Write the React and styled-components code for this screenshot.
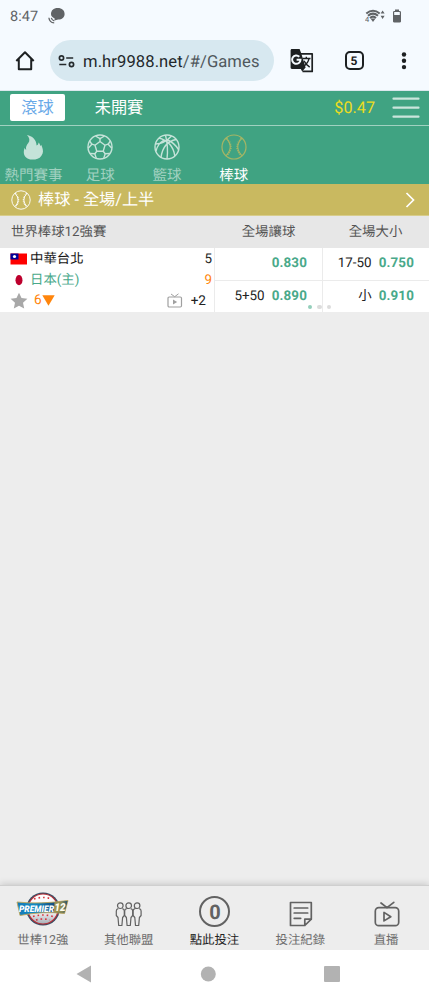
import React from "react";
import styled, { createGlobalStyle } from "styled-components";

const GlobalStyle = createGlobalStyle`
  * { box-sizing: border-box; }
  body {
    margin: 0;
    font-family: Roboto, "Noto Sans CJK TC", sans-serif;
    text-rendering: geometricPrecision;
    background: #ededed;
  }
  svg { display: block; flex: none; }
`;

const Screen = styled.div`
  display: flex;
  flex-direction: column;
  width: 429px;
  height: 1000px;
  overflow: hidden;
  background: #ededed;
`;

/* phone status bar + browser bar */

const StatusBar = styled.div`
  display: flex;
  align-items: center;
  height: 32px;
  padding: 0 27px 0 10px;
  background: #f5faff;
  color: #606366;
  font-size: 14.5px;
  letter-spacing: 0.1px;
`;

const StatusIcons = styled.div`
  display: flex;
  align-items: center;
  gap: 7px;
  margin-left: auto;
`;

const BrowserBar = styled.div`
  display: flex;
  align-items: center;
  height: 59px;
  padding: 0 18px 1px 14px;
  background: #f5faff;
  border-bottom: 1px solid #dbe7ed;
`;

const AddressBar = styled.div`
  display: flex;
  align-items: center;
  gap: 8px;
  width: 224px;
  height: 41px;
  margin: 0 16px 0 14px;
  padding: 3px 0 0 8px;
  border-radius: 21px;
  background: #d7e8f0;
  color: #24292c;
  font-size: 16.6px;
  letter-spacing: 0.08px;
  white-space: nowrap;
`;

const UrlPath = styled.span`
  color: #50585d;
`;

const TabCount = styled.div`
  display: grid;
  place-items: center;
  width: 19px;
  height: 19px;
  margin: 0 37.5px 0 30.5px;
  border: 2px solid #1d2022;
  border-radius: 5px;
  color: #1d2022;
  font-size: 12px;
  font-weight: 700;
  line-height: 1;
`;

/* site header */

const TopNav = styled.header`
  display: flex;
  align-items: center;
  height: 35px;
  padding: 0 9px 1px 10px;
  background: #40a382;
  border-bottom: 1px solid #a0d1c0;
`;

const TopTab = styled.button`
  width: ${({ $active }) => ($active ? "55px" : "108px")};
  height: 27px;
  padding: 0;
  border: 0;
  border-radius: 2px;
  background: ${({ $active }) => ($active ? "#fff" : "transparent")};
  color: ${({ $active }) => ($active ? "#68a9e8" : "#fff")};
  font-family: inherit;
  font-size: 16.2px;
  line-height: 27px;
`;

const Balance = styled.div`
  margin: 0 17px 0 auto;
  color: #eddd1f;
  font-size: 16.2px;
`;

const Sports = styled.nav`
  display: flex;
  height: 58px;
  background: #40a382;
`;

const Sport = styled.div`
  display: flex;
  flex-direction: column;
  align-items: center;
  width: 66.8px;
  padding-top: 8px;
  color: ${({ $active }) => ($active ? "#fff" : "#a0d1c0")};
  font-size: 14.5px;
  line-height: 22px;
  white-space: nowrap;
  svg { margin-bottom: 5px; color: ${({ $active }) => ($active ? "#a5b565" : "#c5e3d9")}; }
`;

const MarketBar = styled.div`
  display: flex;
  align-items: center;
  gap: 7px;
  height: 32px;
  padding: 0 14px 0 11px;
  border-bottom: 1px solid #d8cd8b;
  background: #c9b960;
  color: #fff;
  font-size: 16.2px;
  line-height: 30px;
  > svg:last-child { margin-left: auto; }
`;

/* odds table */

const LeagueRow = styled.div`
  display: grid;
  grid-template-columns: 215px 107px 107px;
  align-items: center;
  height: 32px;
  padding-bottom: 4px;
  background: #e7e7e7;
  color: #555;
  font-size: 13.4px;
  text-align: center;
`;

const LeagueName = styled.div`
  padding-left: 11px;
  text-align: left;
`;

const Match = styled.section`
  position: relative;
  display: grid;
  grid-template-columns: 214px 108px 107px;
  height: 64px;
  background: #fff;
`;

const Teams = styled.div`
  display: flex;
  flex-direction: column;
  padding: 1px 2px 0 10px;
`;

const TeamRow = styled.div`
  display: flex;
  align-items: center;
  height: 20.6px;
  color: ${({ $home }) => ($home ? "#49a98a" : "#151515")};
  font-size: 13.4px;
  line-height: 20px;
  svg { margin-right: 3px; }
`;

const TeamName = styled.span`
  padding-top: 2px;
`;

const Score = styled.span`
  margin: 2px 0 0 auto;
  color: ${({ $hot }) => ($hot ? "#ff850c" : "#222")};
`;

const MatchInfo = styled.div`
  display: flex;
  align-items: center;
  height: 20.6px;
  padding-right: 6px;
  color: #ff850c;
  font-size: 13.6px;
`;

const Inning = styled.span`
  margin-left: 6px;
`;

const MoreCount = styled.span`
  margin: 1px 0 0 8px;
  color: #222;
`;

const OddsColumn = styled.div`
  display: grid;
  grid-template-rows: 32px 32px;
  border-left: 1px solid #ebebeb;
`;

const OddsCell = styled.div`
  display: flex;
  align-items: baseline;
  justify-content: flex-end;
  gap: 7px;
  padding: 1px 15px 0 0;
  color: #222;
  font-size: 13.4px;
  line-height: 30.5px;
  & + & { border-top: 1px solid #ebebeb; }
`;

const Price = styled.b`
  color: #49a98a;
  letter-spacing: 0.15px;
`;

const Dots = styled.div`
  position: absolute;
  left: 308px;
  bottom: 3px;
  display: flex;
  gap: 5px;
`;

const Dot = styled.i`
  width: 4.4px;
  height: 4.4px;
  border-radius: 50%;
  background: ${({ $active }) => ($active ? "#94cfbb" : "#dcdcdc")};
`;

/* bottom bars */

const Footer = styled.footer`
  display: grid;
  grid-template-columns: repeat(5, 1fr);
  height: 65px;
  margin-top: auto;
  border-top: 1px solid #cfcfcf;
  background: #ededed;
  box-shadow: 0 -1px 7px rgba(0, 0, 0, 0.17);
`;

const FooterItem = styled.div`
  display: flex;
  flex-direction: column;
  align-items: center;
  justify-content: flex-end;
  color: ${({ $active }) => ($active ? "#222" : "#6c6c6c")};
  font-size: 12.4px;
  line-height: 18px;
`;

const FooterIcon = styled.div`
  display: flex;
  align-items: center;
  justify-content: center;
  height: 36px;
  margin-bottom: 5px;
  padding: ${({ $low }) => ($low ? "10px 0 0 1px" : "0")};
  color: #626262;
`;

const BetCount = styled.div`
  display: grid;
  place-items: center;
  width: 31px;
  height: 31px;
  margin: 5px 0 0 1px;
  border: 2px solid #626262;
  border-radius: 50%;
  font-size: 20px;
  font-weight: 700;
  line-height: 1;
`;

const SystemNav = styled.div`
  display: flex;
  align-items: center;
  justify-content: space-between;
  height: 50px;
  padding: 0 89px 3px 76px;
  background: #fff;
`;

const StatusChat = styled.svg`
  margin-left: 10px;
`;

const ChatIcon = () => (
  <StatusChat width="17" height="17" viewBox="0 0 17 17">
    <path d="M9.700 0C14 0 16.600 2.500 16.600 5.900S14 11.500 10.200 11.500L6.400 12.500l.3-2C4.200 9.500 3 8.200 3 6.100 3 2.500 5.500 0 9.700 0z" fill="#606366" />
    <path d="M.900 9.800C1.200 12.600 3.300 14.700 6.200 14.900M3.300 9.900c.4 1.500 1.500 2.600 3 3" fill="none" stroke="#606366" strokeWidth="1.300" />
  </StatusChat>
);

const WifiIcon = () => (
  <svg width="20" height="14" viewBox="0 0 20 14" fill="none" stroke="#606366">
    <path d="M1.300 4.500Q8 -1 14.700 4.500M3 6.800Q8 2.600 13 6.800M5 9Q8 6.300 11 9" strokeWidth="2.100" />
    <path d="M5.500 9.400h5L8 13z" fill="#606366" stroke="none" />
    <path d="M15.600 4.600l2-3.200 2 3.200zM15.600 6.800l2 3.200 2-3.200z" fill="#606366" stroke="none" />
    <text x="0" y="13.300" fontSize="7.500" fill="#606366" stroke="none">4</text>
  </svg>
);

const BatteryIcon = () => (
  <svg width="10" height="14" viewBox="0 0 10 14">
    <path d="M3 .5h4v1.700H3z" fill="#606366" />
    <rect x="1.600" y="2.500" width="6.800" height="10.500" rx=".8" fill="none" stroke="#606366" strokeWidth="1.200" />
    <path d="M1.600 6h6.800v7H1.600z" fill="#606366" />
  </svg>
);

const HomeIcon = () => (
  <svg width="22" height="22" viewBox="0 0 22 22" fill="none" stroke="#1d2022" strokeWidth="2" strokeLinejoin="round">
    <path d="M2.300 11L11 2.300 19.700 11M4.800 9.300v9.900h12.400V9.300" />
  </svg>
);

const TuneIcon = () => (
  <svg width="17" height="14" viewBox="0 0 17 14" fill="none" stroke="#24292c" strokeWidth="1.700">
    <circle cx="3.500" cy="3" r="2.100" />
    <path d="M8.200 3h7M1.300 9.500h7" />
    <circle cx="13.500" cy="9.500" r="2.100" />
  </svg>
);

const TranslateIcon = () => (
  <svg width="24" height="24" viewBox="0 0 24 24">
    <path d="M9 4.800h13.200v17.600H12.500" fill="none" stroke="#1d2022" strokeWidth="1.700" strokeLinejoin="round" />
    <path d="M2 0h7.600l1.500 4 4.500 14.400-3.400 4.200-1.400-2.700H2C1 19.900.6 19.300.6 18.500V1.500C.6.600 1 0 2 0z" fill="#1d2022" />
    <path d="M9.300 7.700A4.200 4.200 0 1 0 10.500 10.700H6.600" fill="none" stroke="#f5faff" strokeWidth="2" />
    <path d="M12.500 9.500h8M16.300 7.800v1.700M19 9.700c-.7 3.300-2.700 5.900-5.500 7.800M14 11.800c1.500 2.800 3.200 4.500 5.700 6.300" fill="none" stroke="#1d2022" strokeWidth="1.400" />
  </svg>
);

const MoreIcon = () => (
  <svg width="6" height="20" viewBox="0 0 6 20" fill="#1d2022">
    <circle cx="3" cy="3.500" r="2.200" /><circle cx="3" cy="9.800" r="2.200" /><circle cx="3" cy="16.100" r="2.200" />
  </svg>
);

const MenuIcon = () => (
  <svg width="28" height="22" viewBox="0 0 28 22" stroke="#cae5dc" strokeWidth="2.200" strokeLinecap="round">
    <path d="M1.500 1.700h25M1.500 10.700h25M1.500 19.700h25" />
  </svg>
);

const FireIcon = () => (
  <svg width="26" height="26" viewBox="0 0 26 26" fill="currentColor">
    <path d="M7 1C12 2 16.300 5.300 16.600 11.400c1.200-.4 1.900-1.500 1.900-3 1.200 1.100 1.600 2.200 1.900 3.600.4-.2.700-.7.800-1.300 1.300 2.800 2.400 6 1.400 8.900-1.200 3.500-4.100 5.600-7.400 5.800H10.200C6.400 24.800 3.900 22 3.800 18.500c0-1.900.3-3.300 1-4.700.1 1 .6 1.600 1.400 2-.7-2.600.4-4.600 2.100-6.700C10.200 6.600 9.500 3.600 7 1z" />
  </svg>
);

const SoccerIcon = () => (
  <svg width="26" height="26" viewBox="0 0 26 26" fill="none" stroke="currentColor" strokeWidth="1.400" strokeLinejoin="round">
    <circle cx="13" cy="13" r="12" />
    <path d="M13 7.500l5 3.700-1.800 6H9.800l-1.800-6zM13 7.500V4.700M18 11.200l3.200-1M16.200 17.200l2 2.600M9.800 17.200l-2 2.600M8 11.200l-3.200-1" />
    <path d="M8.500 2l4.500 2.700L17.500 2M23.400 7l-2.200 3.200 3.600 4M23 19.500l-4.800.3-1.500 4.600M9.300 24.400l-1.500-4.600-4.800-.3M1.200 14.200l3.600-4L2.600 7" />
  </svg>
);

const BasketballIcon = () => (
  <svg width="26" height="26" viewBox="0 0 26 26" fill="none" stroke="currentColor" strokeWidth="1.400">
    <circle cx="13" cy="13" r="12" />
    <path d="M11.500 1.200Q14.500 13 13 25M5 4Q19 8 20.800 22M1.500 10Q10 10 17.500 2M22.300 5.500Q9 8 7 23.500M2 17Q3.500 10 10 6M24.500 15.500Q20 8.500 13.500 6" />
  </svg>
);

const BaseballIcon = ({ size = 26 }) => (
  <svg width={size} height={size} viewBox="0 0 26 26" fill="none" stroke="currentColor" strokeWidth="1.200">
    <circle cx="13" cy="13" r="12" />
    <path d="M5 4.200Q13.500 13 5 21.800M21 4.200Q12.500 13 21 21.800" strokeWidth="1.100" />
    <path d="M5.600 4.200Q14.100 13 5.600 21.800M20.400 4.200Q11.900 13 20.400 21.800" strokeWidth="1.800" strokeDasharray="1 1.200" />
  </svg>
);

const ArrowIcon = () => (
  <svg width="10" height="16" viewBox="0 0 10 16" fill="none" stroke="#fff" strokeWidth="1.700">
    <path d="M1.500 1l7 7-7 7" />
  </svg>
);

const TaiwanFlag = () => (
  <svg width="17" height="12" viewBox="0 0 17 12">
    <path d="M.5.500h16.500v11H.5z" fill="#fe0000" />
    <path d="M.5.500h8v6h-8z" fill="#000098" />
    <circle cx="4.500" cy="3.500" r="1.600" fill="#fff" />
  </svg>
);

const JapanFlag = () => (
  <svg width="17" height="12" viewBox="0 0 17 12">
    <path d="M0 0h17v12H0z" fill="#fff" />
    <ellipse cx="9" cy="6.200" rx="3.500" ry="5.100" fill="#bd002d" />
  </svg>
);

const StarIcon = () => (
  <svg width="18" height="17" viewBox="0 0 18 17">
    <path d="M9 .7l2.500 5.400 5.900.7-4.400 4 1.200 5.800L9 13.700l-5.200 2.900L5 10.800l-4.400-4 5.900-.7z" fill="#a8a8a8" />
  </svg>
);

const DownIcon = () => (
  <svg width="13" height="11" viewBox="0 0 13 11"><path d="M.3.300h12.400L6.500 10.700z" fill="#ff850c" /></svg>
);

const LiveSvg = styled.svg`
  margin-left: auto;
`;

const LiveIcon = () => (
  <LiveSvg width="16" height="15" viewBox="0 0 16 15" fill="none" stroke="#a0a0a0">
    <rect x="1" y="4" width="13.500" height="10" rx="1.200" strokeWidth="1.200" />
    <path d="M4 1l3.700 2.700L11.500.800" />
    <path d="M6 6.600v4.800l4.200-2.400z" fill="#a0a0a0" stroke="none" />
  </LiveSvg>
);

const PremierLogo = () => (
  <svg width="54" height="36" viewBox="0 0 54 36">
    <defs>
      <linearGradient id="ball" x1="0" y1="0" x2="0" y2="1">
        <stop offset="0" stopColor="#fff" /><stop offset=".6" stopColor="#f5f3f5" /><stop offset="1" stopColor="#a5adb5" />
      </linearGradient>
      <linearGradient id="ribbon">
        <stop offset="0" stopColor="#1679b6" /><stop offset=".35" stopColor="#118bc4" /><stop offset=".72" stopColor="#174f80" /><stop offset="1" stopColor="#245873" />
      </linearGradient>
      <linearGradient id="gold">
        <stop offset="0" stopColor="#a8984a" /><stop offset=".6" stopColor="#8c8a55" /><stop offset="1" stopColor="#24506c" />
      </linearGradient>
    </defs>
    <ellipse cx="27" cy="18" rx="16.800" ry="16.600" fill="#334e64" />
    <circle cx="27" cy="18" r="15" fill="url(#ball)" stroke="#bd3038" strokeWidth="1.200" />
    <path d="M18 8q9-3 18 0M17 25.500q10-3 20 0M20 29q7-2 14 0" fill="none" stroke="#d8343c" strokeWidth="1.600" strokeDasharray="1.600 3" />
    <path d="M1 11q23 2.500 51-1.500l-3.500 13q-22-2.500-44.500 2z" fill="url(#ribbon)" stroke="#bea65a" strokeWidth=".9" />
    <path d="M38.500 11.300q7-.4 13-1.300l-3.300 12q-5-.5-10.300-.5z" fill="url(#gold)" />
    <text x="3" y="21" fontSize="9" fontWeight="900" fontStyle="italic" fill="#fff" textLength="35" lengthAdjust="spacingAndGlyphs">PREMIER</text>
    <text x="38.500" y="20.400" fontSize="11" fontWeight="900" fontStyle="italic" fill="#fffdf0" textLength="11" lengthAdjust="spacingAndGlyphs">12</text>
  </svg>
);

const PeopleIcon = () => (
  <svg width="28" height="25" viewBox="0 0 28 25" fill="none" stroke="currentColor" strokeWidth="1.200" strokeLinejoin="round">
    {[5.3, 13.700, 22.100].map((x) => (
      <g key={x}>
        <circle cx={x} cy="3.700" r="2.800" />
        <path d={`M${x - 2} 6.600Q${x - 4} 7 ${x - 4} 9v4.500l1.700 2 .7 8h3.200l.7-8 1.700-2V9q0-2-2-2.400`} />
      </g>
    ))}
  </svg>
);

const RecordIcon = () => (
  <svg width="24" height="26" viewBox="0 0 24 26" fill="none" stroke="currentColor" strokeWidth="1.700" strokeLinejoin="round" strokeLinecap="round">
    <path d="M1.500 1.500h20.800v16.700l-6.500 6.300H1.500zM15.800 24.500v-6.300h6.500M5.200 7h13.500M5.200 12h13.500M5.200 17.300h6.500" />
  </svg>
);

const TvIcon = () => (
  <svg width="26" height="26" viewBox="0 0 26 26" fill="none" stroke="currentColor" strokeWidth="1.700" strokeLinejoin="round" strokeLinecap="round">
    <rect x="1.300" y="6.700" width="23.400" height="18" rx="3.500" />
    <path d="M7 2l6 4.700 6.800-5.400M10 11.400v8.500l6.800-4.200z" />
  </svg>
);

const sports = [
  { name: "熱門賽事", Icon: FireIcon },
  { name: "足球", Icon: SoccerIcon },
  { name: "籃球", Icon: BasketballIcon },
  { name: "棒球", Icon: BaseballIcon, active: true },
];

const odds = [
  [{ price: "0.830" }, { line: "5+50", price: "0.890" }],
  [{ line: "17-50", price: "0.750" }, { line: "小", price: "0.910" }],
];

const footerItems = [
  { name: "世棒12強", icon: <PremierLogo /> },
  { name: "其他聯盟", icon: <PeopleIcon />, low: true },
  { name: "點此投注", icon: <BetCount>0</BetCount>, active: true },
  { name: "投注紀錄", icon: <RecordIcon />, low: true },
  { name: "直播", icon: <TvIcon />, low: true },
];

const App = () => {
  return (
    <Screen>
      <GlobalStyle />
      <StatusBar>
        8:47
        <ChatIcon />
        <StatusIcons>
          <WifiIcon />
          <BatteryIcon />
        </StatusIcons>
      </StatusBar>
      <BrowserBar>
        <HomeIcon />
        <AddressBar>
          <TuneIcon />
          <span>m.hr9988.net<UrlPath>/#/Games</UrlPath></span>
        </AddressBar>
        <TranslateIcon />
        <TabCount>5</TabCount>
        <MoreIcon />
      </BrowserBar>

      <TopNav>
        <TopTab $active>滾球</TopTab>
        <TopTab>未開賽</TopTab>
        <Balance>$0.47</Balance>
        <MenuIcon />
      </TopNav>
      <Sports>
        {sports.map(({ name, Icon, active }) => (
          <Sport key={name} $active={active}>
            <Icon />
            {name}
          </Sport>
        ))}
      </Sports>
      <MarketBar>
        <BaseballIcon size={20} />
        <span>棒球 - 全場/上半</span>
        <ArrowIcon />
      </MarketBar>

      <LeagueRow>
        <LeagueName>世界棒球12強賽</LeagueName>
        <div>全場讓球</div>
        <div>全場大小</div>
      </LeagueRow>
      <Match>
        <Teams>
          <TeamRow><TaiwanFlag /><TeamName>中華台北</TeamName><Score>5</Score></TeamRow>
          <TeamRow $home><JapanFlag /><TeamName>日本(主)</TeamName><Score $hot>9</Score></TeamRow>
          <MatchInfo>
            <StarIcon />
            <Inning>6</Inning>
            <DownIcon />
            <LiveIcon />
            <MoreCount>+2</MoreCount>
          </MatchInfo>
        </Teams>
        {odds.map((column, i) => (
          <OddsColumn key={i}>
            {column.map(({ line, price }) => (
              <OddsCell key={price}>
                {line && <span>{line}</span>}
                <Price>{price}</Price>
              </OddsCell>
            ))}
          </OddsColumn>
        ))}
        <Dots><Dot $active /><Dot /><Dot /></Dots>
      </Match>

      <Footer>
        {footerItems.map(({ name, icon, active, low }) => (
          <FooterItem key={name} $active={active}>
            <FooterIcon $low={low}>{icon}</FooterIcon>
            {name}
          </FooterItem>
        ))}
      </Footer>
      <SystemNav>
        <svg width="16" height="18" viewBox="0 0 16 18"><path d="M15 .5v17L.5 9z" fill="#b2b2b2" /></svg>
        <svg width="16" height="16" viewBox="0 0 16 16"><circle cx="8.300" cy="8" r="7.500" fill="#b2b2b2" /></svg>
        <svg width="16" height="16" viewBox="0 0 16 16"><rect width="16" height="16" rx="1" fill="#b2b2b2" /></svg>
      </SystemNav>
    </Screen>
  );
};

export default App;
